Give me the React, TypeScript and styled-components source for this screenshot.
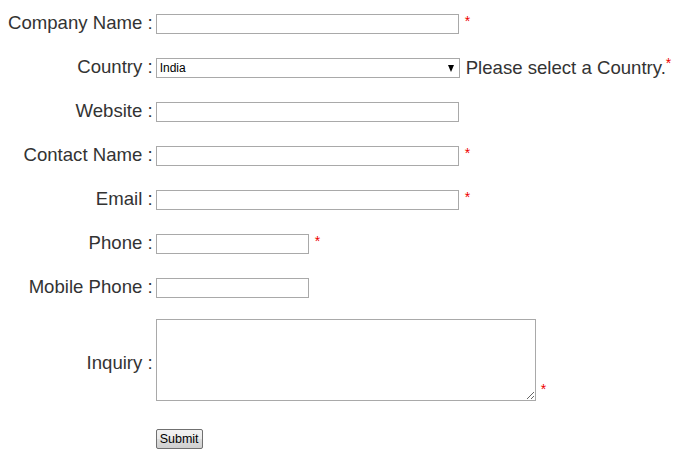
import React from "react";
import styled, { createGlobalStyle } from "styled-components";

const Global = createGlobalStyle`
  html, body { margin: 0; padding: 0; background: #fff; }
  body { font-family: "Liberation Sans", Arial, sans-serif; color: #333; }
`;

const Table = styled.table`
  border-collapse: collapse;
  margin: 1px 0 0 0;
`;

const Row = styled.tr``;

const LabelCell = styled.td`
  text-align: right;
  vertical-align: middle;
  padding: 0 3px 0 8px;
  font-size: 18.6px;
  color: #333;
  white-space: nowrap;
  height: 44px;
`;

const FieldCell = styled.td<{ $tall?: boolean }>`
  vertical-align: middle;
  padding: ${(p) => (p.$tall ? "10px 0 15px 0" : "0")};
  height: 44px;
  white-space: nowrap;
  font-size: 18.6px;
  color: #333;
`;

const TextInput = styled.input<{ $w: number }>`
  box-sizing: border-box;
  width: ${(p) => p.$w}px;
  height: 20px;
  border: 1px solid #a9a9a9;
  padding: 1px 2px;
  margin: 0;
  font-size: 12px;
  font-family: "Liberation Sans", Arial, sans-serif;
  vertical-align: middle;
  outline: none;
`;

const SelectWrap = styled.span`
  position: relative;
  display: inline-block;
  vertical-align: middle;
`;

const Select = styled.select`
  appearance: none;
  -webkit-appearance: none;
  box-sizing: border-box;
  width: 304px;
  height: 20px;
  border: 1px solid #a9a9a9;
  border-radius: 0;
  background: #fff;
  padding: 0 3px;
  margin: 0;
  font-size: 12px;
  font-family: "Liberation Sans", Arial, sans-serif;
  color: #000;
  display: block;
  outline: none;
`;

const Arrow = styled.span`
  position: absolute;
  right: 6px;
  top: 7px;
  width: 0;
  height: 0;
  border-left: 3.5px solid transparent;
  border-right: 3.5px solid transparent;
  border-top: 7px solid #000;
  pointer-events: none;
`;

const Hint = styled.span`
  margin-left: 6px;
  vertical-align: middle;
  color: #333;
`;

const Req = styled.span<{ $gap?: number }>`
  color: #e00;
  font-size: 14px;
  margin-left: ${(p) => p.$gap ?? 6}px;
  vertical-align: middle;
  position: relative;
  top: ${(p) => (p.$gap === 0 ? -5 : -3)}px;
`;

const TextArea = styled.textarea`
  box-sizing: border-box;
  width: 380px;
  height: 82px;
  border: 1px solid #a9a9a9;
  margin: 0;
  padding: 2px;
  vertical-align: bottom;
  outline: none;
  font-family: "Liberation Mono", monospace;
`;

const AreaReq = styled.span`
  color: #e00;
  font-size: 14px;
  margin-left: 5px;
  vertical-align: bottom;
  position: relative;
  top: -4px;
`;

const SubmitButton = styled.button`
  box-sizing: border-box;
  height: 20px;
  padding: 0 3px;
  margin: 0;
  font-family: "Liberation Sans", Arial, sans-serif;
  font-size: 12.5px;
  color: #000;
  border: 1px solid #707070;
  border-radius: 2px;
  background: linear-gradient(#f2f2f2 0%, #ebebeb 50%, #dddddd 51%, #cfcfcf 100%);
  vertical-align: middle;
`;

const fields: { label: string; w: number; req: boolean }[] = [
  { label: "Website", w: 303, req: false },
  { label: "Contact Name", w: 303, req: true },
  { label: "Email", w: 303, req: true },
  { label: "Phone", w: 153, req: true },
  { label: "Mobile Phone", w: 153, req: false },
];

export default function App() {
  return (
    <>
      <Global />
      <form onSubmit={(e) => e.preventDefault()}>
        <Table>
          <tbody>
            <Row>
              <LabelCell>Company Name :</LabelCell>
              <FieldCell>
                <TextInput $w={303} />
                <Req>*</Req>
              </FieldCell>
            </Row>
            <Row>
              <LabelCell>Country :</LabelCell>
              <FieldCell>
                <SelectWrap>
                  <Select defaultValue="India">
                    <option>India</option>
                  </Select>
                  <Arrow />
                </SelectWrap>
                <Hint>Please select a Country.</Hint>
                <Req $gap={0}>*</Req>
              </FieldCell>
            </Row>
            {fields.map((f) => (
              <Row key={f.label}>
                <LabelCell>{f.label} :</LabelCell>
                <FieldCell>
                  <TextInput $w={f.w} />
                  {f.req && <Req>*</Req>}
                </FieldCell>
              </Row>
            ))}
            <Row>
              <LabelCell>Inquiry :</LabelCell>
              <FieldCell $tall>
                <TextArea />
                <AreaReq>*</AreaReq>
              </FieldCell>
            </Row>
            <Row>
              <LabelCell />
              <FieldCell>
                <SubmitButton type="submit">Submit</SubmitButton>
              </FieldCell>
            </Row>
          </tbody>
        </Table>
      </form>
    </>
  );
}
